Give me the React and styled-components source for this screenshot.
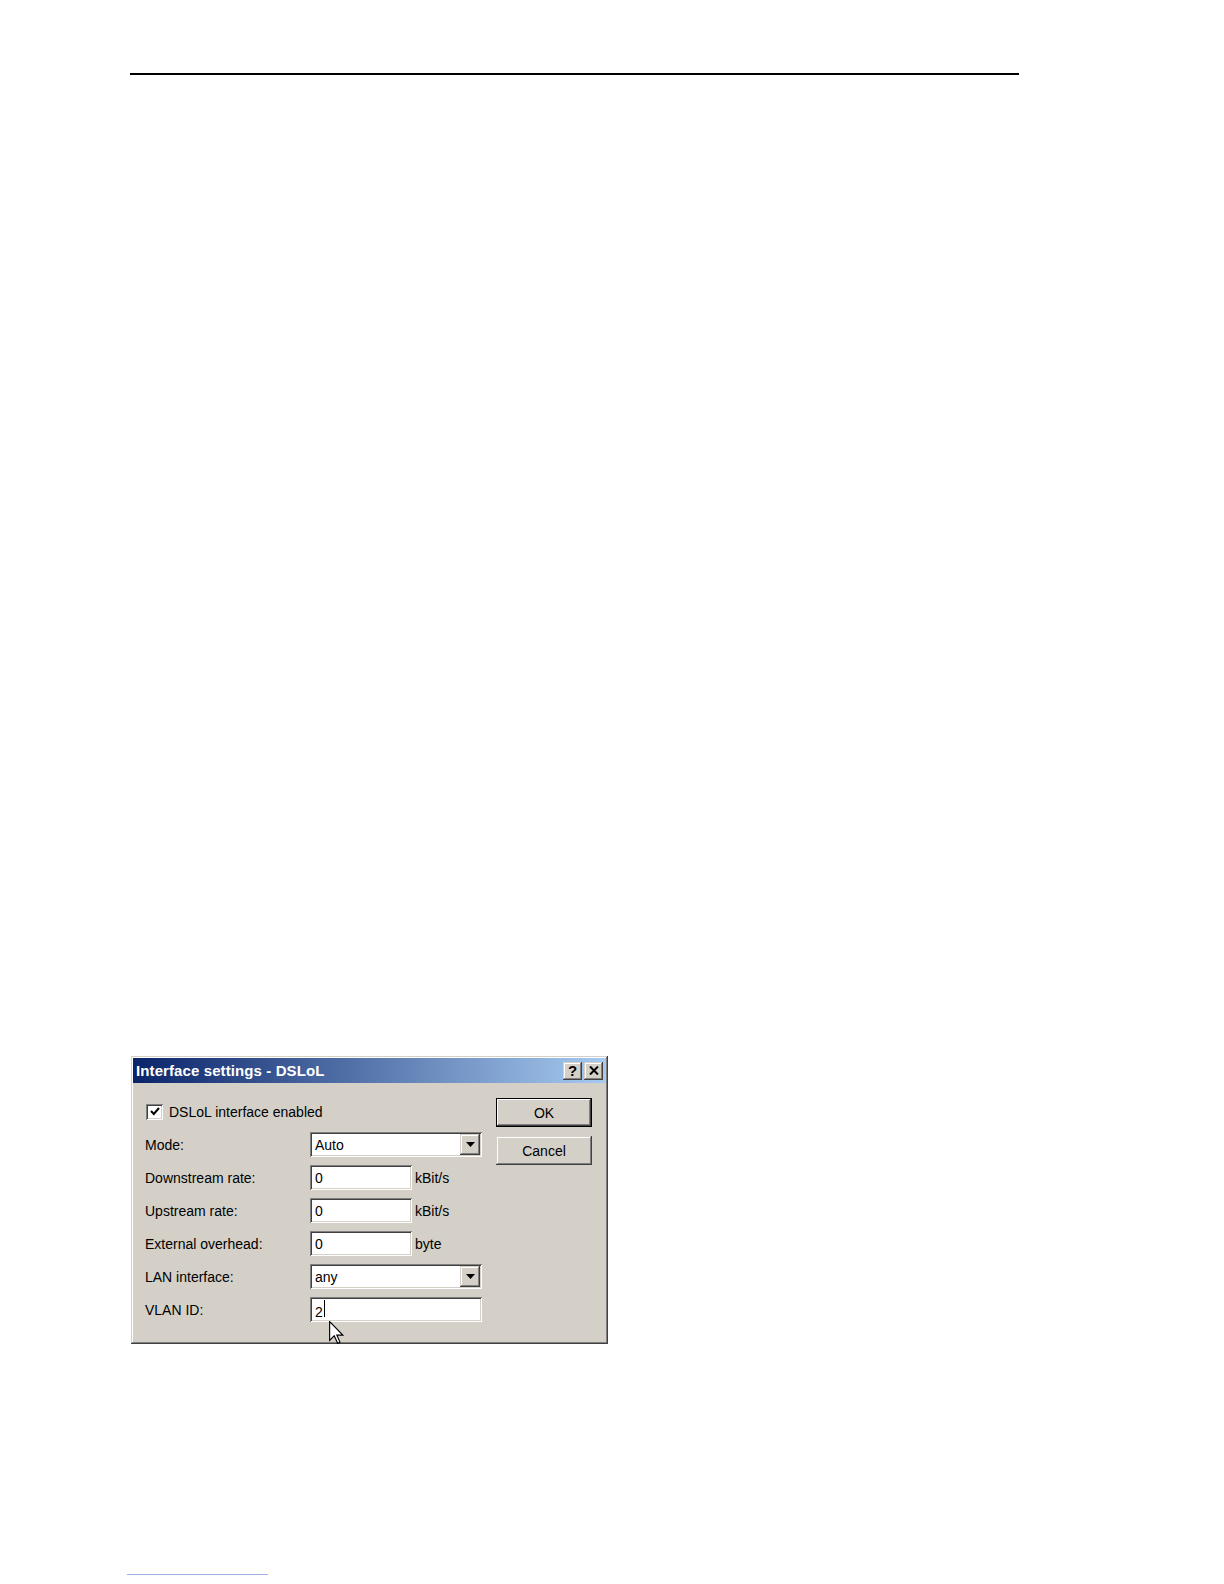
import React from "react";
import styled, { createGlobalStyle } from "styled-components";

const GlobalStyle = createGlobalStyle`
  html, body {
    margin: 0;
    padding: 0;
    background: #ffffff;
  }
  body {
    font-family: "Liberation Sans", Arial, sans-serif;
  }
`;

const raised = `
  box-shadow: inset -1px -1px #404040, inset 1px 1px #d4d0c8,
    inset -2px -2px #808080, inset 2px 2px #ffffff;
`;

const sunken = `
  box-shadow: inset 1px 1px #808080, inset -1px -1px #ffffff,
    inset 2px 2px #404040, inset -2px -2px #d4d0c8;
`;

const Page = styled.div`
  width: 1224px;
  height: 1584px;
  padding-top: 73px;
  box-sizing: border-box;
  overflow: hidden;
`;

const TopRule = styled.div`
  margin-left: 130px;
  width: 889px;
  height: 2px;
  background: #000;
`;

const FootRule = styled.div`
  margin-left: 127px;
  margin-top: 230px;
  width: 141px;
  height: 1px;
  background: #9fb2e4;
`;

const Dialog = styled.div`
  position: relative;
  margin-top: 981px;
  margin-left: 131px;
  width: 477px;
  height: 288px;
  box-sizing: border-box;
  padding: 2px;
  background: #d4d0c8;
  ${raised}
  overflow: hidden;
  color: #000;
  font-size: 14px;
`;

const TitleBar = styled.div`
  height: 25px;
  display: flex;
  align-items: center;
  justify-content: space-between;
  padding: 0 3px 0 3px;
  background: linear-gradient(to right, #0a246a, #a6caf0);
`;

const Title = styled.span`
  color: #fff;
  font-weight: bold;
  font-size: 15px;
  letter-spacing: 0.1px;
`;

const TitleButtons = styled.div`
  display: flex;
  gap: 2px;
`;

const TitleButton = styled.div`
  width: 19px;
  height: 18px;
  background: #d4d0c8;
  ${raised}
  display: flex;
  align-items: center;
  justify-content: center;
  font-weight: bold;
  font-size: 15px;
  line-height: 1;
`;

const Body = styled.div`
  display: flex;
  padding: 12px 14px 0 12px;
`;

const Form = styled.div`
  width: 351px;
  display: grid;
  grid-template-columns: 165px auto;
  grid-auto-rows: 33px;
  align-items: center;
`;

const CheckRow = styled.label`
  grid-column: 1 / span 2;
  display: flex;
  align-items: center;
  gap: 6px;
  padding-left: 1px;
`;

const CheckBox = styled.span`
  width: 17px;
  height: 16px;
  box-sizing: border-box;
  background: #fff;
  ${sunken}
  display: flex;
  align-items: center;
  justify-content: center;
`;

const Label = styled.span`
  white-space: nowrap;
`;

const Control = styled.div`
  display: flex;
  align-items: center;
  gap: 3px;
`;

const Field = styled.div`
  width: ${(p) => p.$w}px;
  height: 25px;
  box-sizing: border-box;
  background: #fff;
  ${sunken}
  display: flex;
  align-items: center;
  justify-content: space-between;
  padding: 0 2px 0 5px;
`;

const Unit = styled.span`
  white-space: nowrap;
`;

const DropButton = styled.div`
  width: 20px;
  height: 21px;
  background: #d4d0c8;
  ${raised}
  display: flex;
  align-items: center;
  justify-content: center;
`;

const Caret = styled.span`
  display: inline-block;
  width: 1px;
  height: 17px;
  background: #000;
  margin-left: 1px;
`;

const Buttons = styled.div`
  width: 96px;
  display: flex;
  flex-direction: column;
  gap: 9px;
  padding-top: 3px;
`;

const Button = styled.div`
  height: 29px;
  box-sizing: border-box;
  background: #d4d0c8;
  display: flex;
  align-items: center;
  justify-content: center;
  ${(p) =>
    p.$default
      ? `border: 1px solid #000;
         box-shadow: inset -1px -1px #404040, inset 1px 1px #ffffff, inset -2px -2px #808080;`
      : raised}
`;

const Cursor = styled.svg`
  position: absolute;
  left: 198px;
  top: 265px;
`;

function Select({ value, width }) {
  return (
    <Field $w={width}>
      <span>{value}</span>
      <DropButton>
        <svg width="9" height="5" viewBox="0 0 9 5">
          <path d="M0 0 H9 L4.5 5 Z" fill="#000" />
        </svg>
      </DropButton>
    </Field>
  );
}

const rows = [
  { label: "Downstream rate:", value: "0", unit: "kBit/s" },
  { label: "Upstream rate:", value: "0", unit: "kBit/s" },
  { label: "External overhead:", value: "0", unit: "byte" },
];

export default function App() {
  return (
    <Page>
      <GlobalStyle />
      <TopRule />
      <Dialog>
        <TitleBar>
          <Title>Interface settings - DSLoL</Title>
          <TitleButtons>
            <TitleButton>?</TitleButton>
            <TitleButton>
              <svg width="10" height="9" viewBox="0 0 10 9">
                <path d="M1 0.5 L9 8.5 M9 0.5 L1 8.5" stroke="#000" strokeWidth="2" />
              </svg>
            </TitleButton>
          </TitleButtons>
        </TitleBar>
        <Body>
          <Form>
            <CheckRow>
              <CheckBox>
                <svg width="10" height="9" viewBox="0 0 10 9">
                  <path d="M1 4 L3.8 7 L9 1" stroke="#000" strokeWidth="2" fill="none" />
                </svg>
              </CheckBox>
              <Label>DSLoL interface enabled</Label>
            </CheckRow>
            <Label>Mode:</Label>
            <Control>
              <Select value="Auto" width={172} />
            </Control>
            {rows.map((r) => (
              <React.Fragment key={r.label}>
                <Label>{r.label}</Label>
                <Control>
                  <Field $w={102}>
                    <span>{r.value}</span>
                  </Field>
                  <Unit>{r.unit}</Unit>
                </Control>
              </React.Fragment>
            ))}
            <Label>LAN interface:</Label>
            <Control>
              <Select value="any" width={172} />
            </Control>
            <Label>VLAN ID:</Label>
            <Control>
              <Field $w={172}>
                <span>
                  2<Caret />
                </span>
              </Field>
            </Control>
          </Form>
          <Buttons>
            <Button $default>OK</Button>
            <Button>Cancel</Button>
          </Buttons>
        </Body>
        <Cursor width="15" height="24" viewBox="0 0 13 21">
          <path
            d="M0.5 0.5 V17 L4.5 13 L7.5 19.5 L9.5 18.5 L6.8 12.3 H12 Z"
            fill="#fff"
            stroke="#000"
            strokeWidth="1"
          />
        </Cursor>
      </Dialog>
      <FootRule />
    </Page>
  );
}
